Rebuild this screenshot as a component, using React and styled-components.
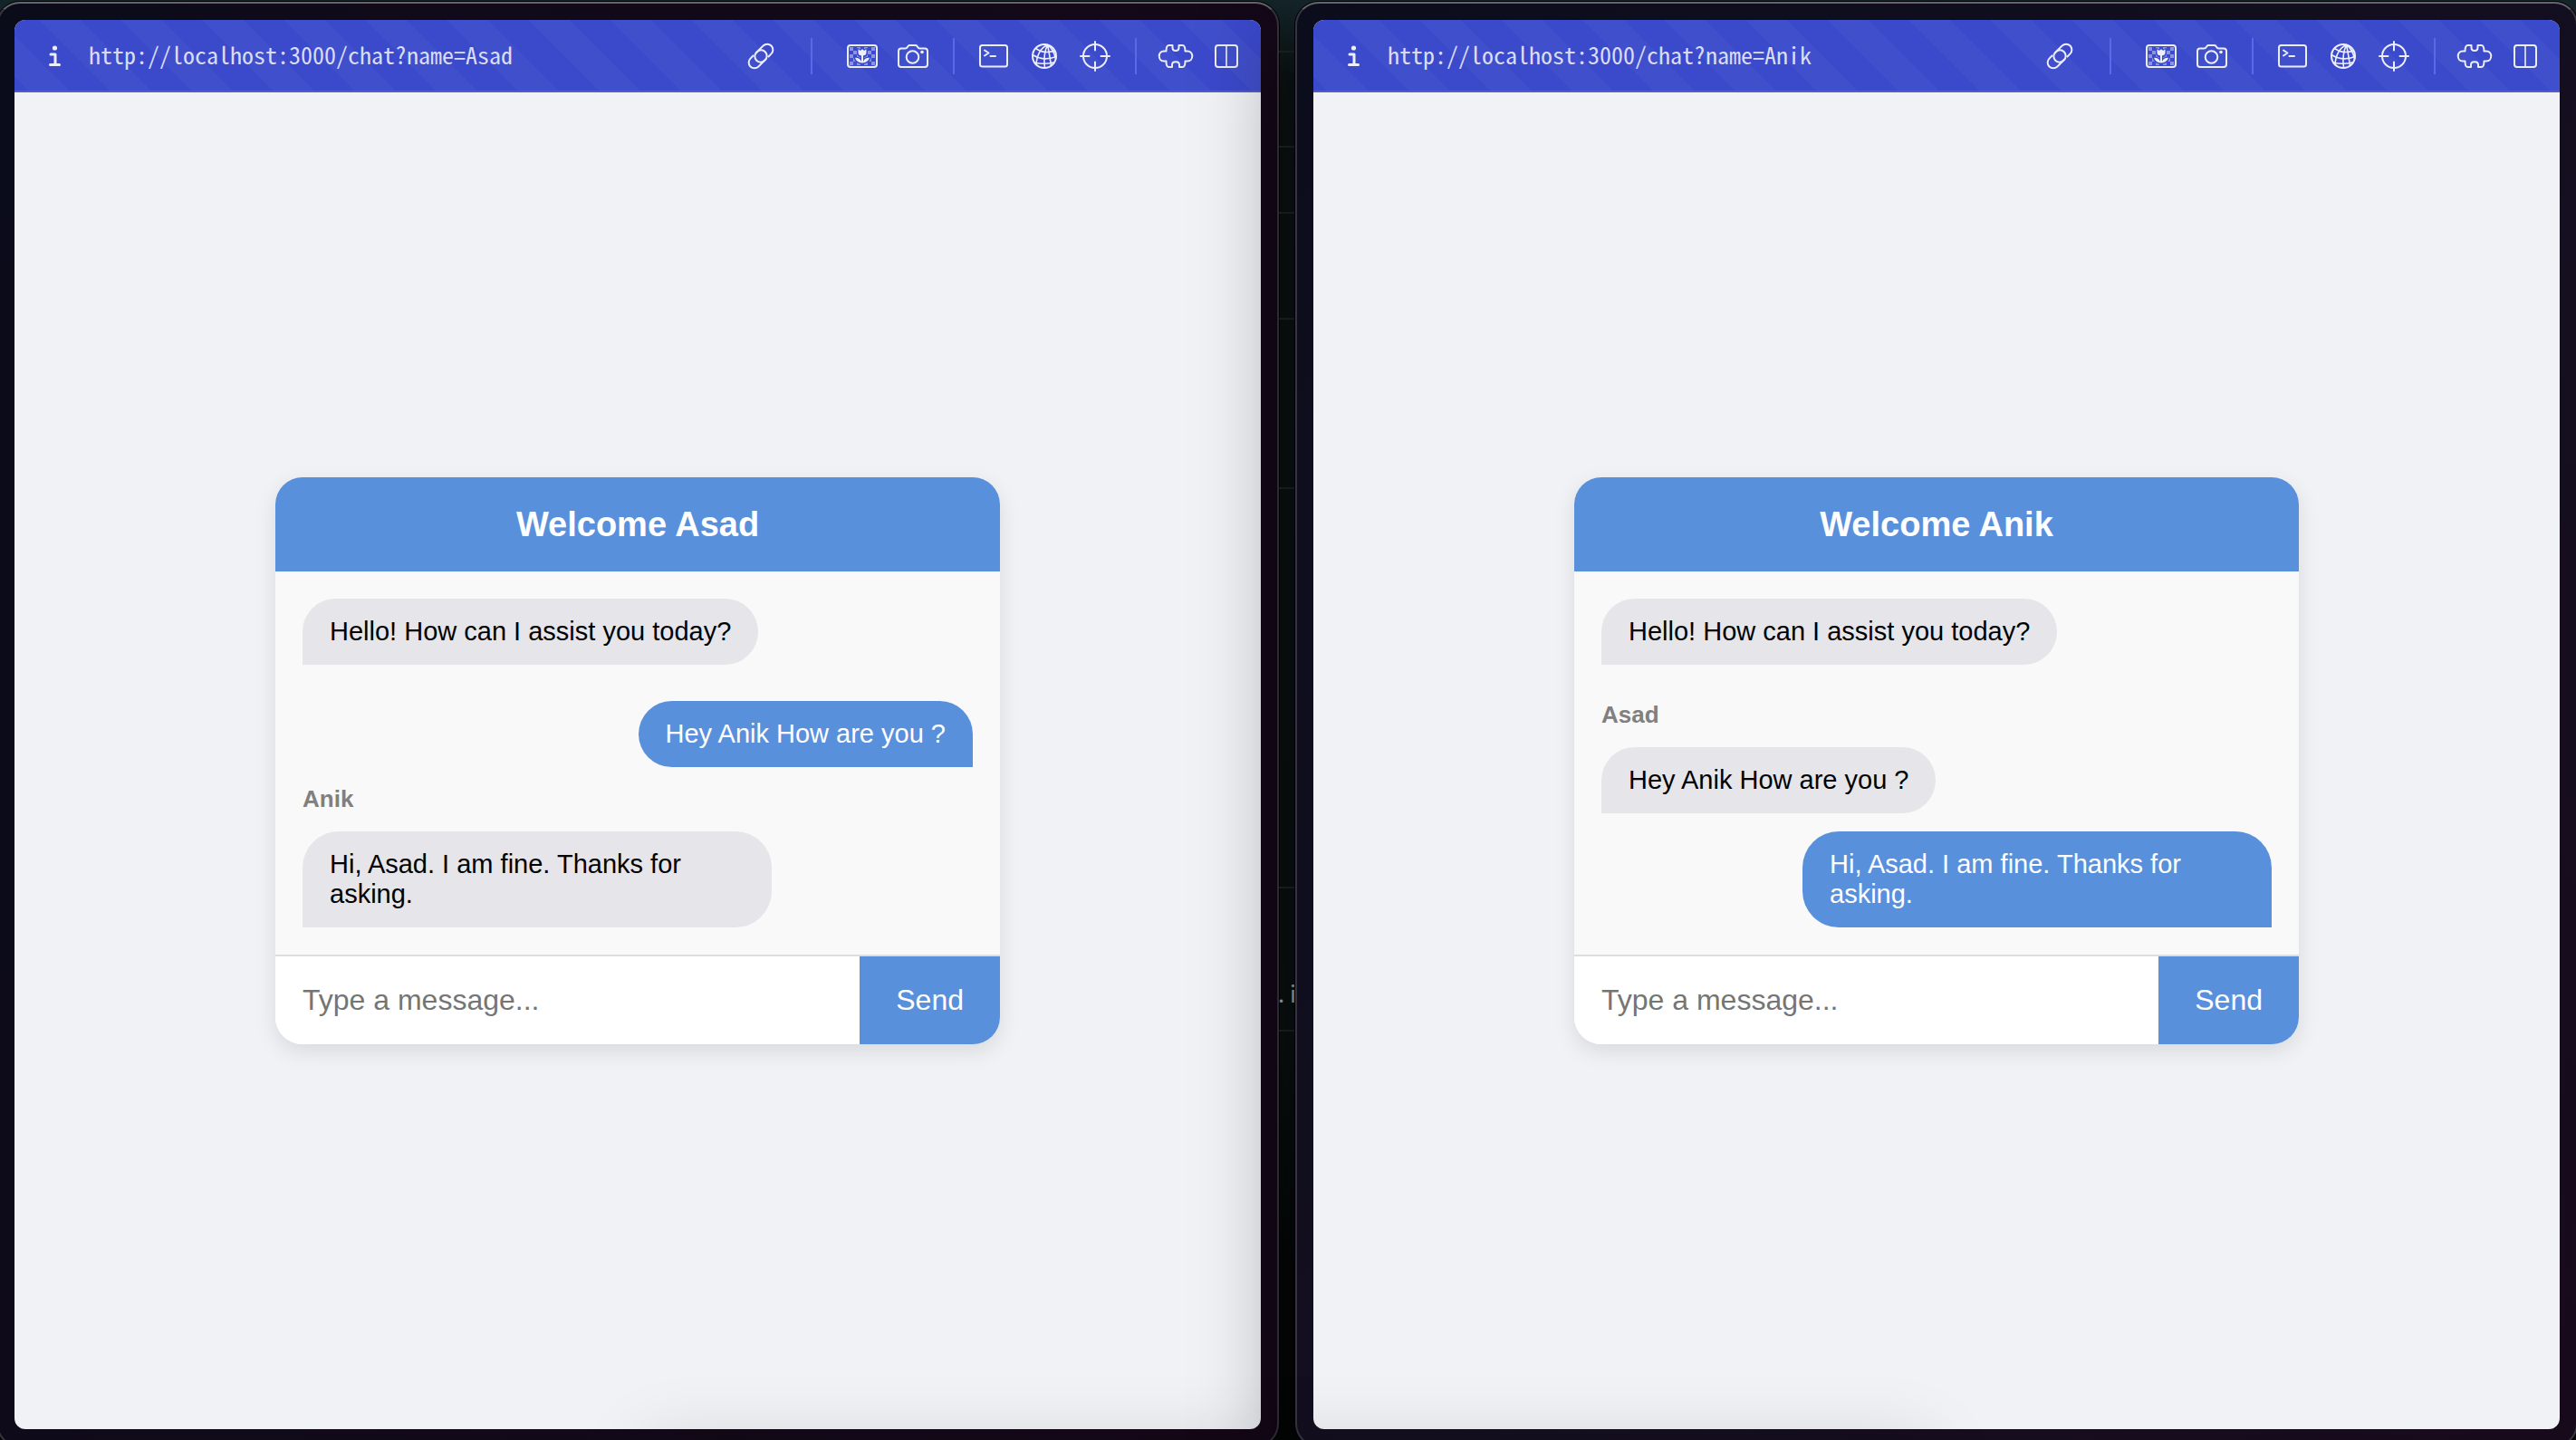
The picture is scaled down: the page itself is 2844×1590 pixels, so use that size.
import React from "react";
import styled, { createGlobalStyle, css } from "styled-components";

const GlobalStyle = createGlobalStyle`
  *, *::before, *::after { box-sizing: border-box; }
  html, body { margin: 0; padding: 0; background: #0c1414; }
  body { font-family: "Liberation Sans", Arial, sans-serif; }
  button, input { font-family: inherit; }
`;

const mono = `"Noto Sans Mono CJK SC", "DejaVu Sans Mono", monospace`;
const blue = "#5990dc";

const Viewport = styled.div`
  position: relative;
  height: 100vh;
  overflow: hidden;
  background: linear-gradient(#16282d 0, #0e1617 90px, #0d1415 1150px, #060909 1400px);

  /* soft shade rising from below the bottom edge, over both windows */
  &::after {
    content: "";
    position: absolute;
    top: 100%;
    left: 25%;
    right: 25%;
    height: 80px;
    pointer-events: none;
    box-shadow: 0 0 80px rgba(0, 0, 0, 0.12);
  }
`;

const Desktop = styled.main`
  display: grid;
  grid-template-columns: minmax(0, 1fr) 18px minmax(0, 1fr);
  height: calc(100vh + 8px);
  margin: 0 -2px 0 -4px;
`;

const Window = styled.section`
  display: flex;
  margin-top: 2px;
  padding: 18px;
  border: 2px solid #39333f;
  border-top-color: #66646a;
  border-radius: 26px;
  background: ${(p) => p.$tint};
  box-shadow: 0 0 0 1px #000, 0 36px 100px rgba(0, 0, 0, 0.5);
`;

const Screen = styled.div`
  flex: 1;
  min-width: 0;
  display: flex;
  flex-direction: column;
  overflow: hidden;
  border-radius: 12px;
  background: #f0f2f6;
`;

const Toolbar = styled.header`
  display: flex;
  align-items: center;
  height: 80px;
  padding: 2px 10px 0 16px;
  border-bottom: 2px solid #4f5cd1;
  color: #edeefb;
  background-color: #3b49cb;
  background-image: linear-gradient(
    45deg,
    #404fcb 25%,
    transparent 25%,
    transparent 50%,
    #404fcb 50%,
    #404fcb 75%,
    transparent 75%
  );
  background-size: 90px 90px;
  background-position: 28px 0;
`;

const ToolButton = styled.button`
  flex: none;
  display: flex;
  align-items: center;
  justify-content: center;
  width: 56px;
  height: 56px;
  padding: 0;
  border: 0;
  background: none;
  color: inherit;
`;

const Divider = styled.span`
  flex: none;
  width: 2px;
  height: 40px;
  margin: ${(p) => (p.$wide ? "0 27px" : "0 15px 0 16px")};
  background: #5a68ea;
`;

const Address = styled.input`
  flex: 1;
  min-width: 0;
  height: 50px;
  padding: 0 0 6px 10px;
  border: 0;
  outline: 0;
  background: none;
  color: #dadcf6;
  font-family: ${mono};
  font-size: 26px;
`;

const Page = styled.div`
  flex: 1;
  display: flex;
  align-items: center;
  justify-content: center;
`;

const ChatCard = styled.article`
  width: 100%;
  max-width: 800px;
  overflow: hidden;
  border-radius: 30px;
  background: #fff;
  box-shadow: 0 8px 24px rgba(0, 0, 0, 0.1);
`;

const ChatTitle = styled.h1`
  margin: 0;
  padding: 30px;
  background: ${blue};
  color: #fff;
  font-size: 38px;
  line-height: 44px;
  text-align: center;
`;

const Messages = styled.div`
  display: flex;
  flex-direction: column;
  gap: 20px;
  padding: 30px;
  background: #f9f9f9;
`;

const Sender = styled.div`
  color: #808080;
  font-size: 26px;
  font-weight: 700;
  line-height: 31px;
`;

const Bubble = styled.p`
  max-width: 70%;
  margin: 0;
  padding: 20px 30px;
  font-size: 29px;
  line-height: 33px;
  ${(p) =>
    p.$own
      ? css`
          align-self: flex-end;
          border-radius: 40px 40px 0 40px;
          background: ${blue};
          color: #fff;
        `
      : css`
          align-self: flex-start;
          border-radius: 40px 40px 40px 0;
          background: #e5e5ea;
          color: #000;
        `}
  ${(p) => p.$greeting && "margin-bottom: 20px;"}
`;

const Composer = styled.form`
  display: flex;
  border-top: 2px solid #ddd;
`;

const MessageInput = styled.input`
  flex: 1;
  min-width: 0;
  padding: 30px;
  border: 0;
  outline: 0;
  background: #fff;
  font-size: 32px;
  line-height: 37px;
  &::placeholder { color: #757575; opacity: 1; }
`;

const SendButton = styled.button`
  padding: 0 40px;
  border: 0;
  background: ${blue};
  color: #fff;
  font-size: 32px;
`;

const Gutter = styled.div`
  display: flex;
  flex-direction: column;
  overflow: hidden;
`;

const Strip = styled.div`
  flex: none;
  display: flex;
  align-items: flex-end;
  justify-content: center;
  height: ${(p) => p.$h}px;
  padding-bottom: 26px;
  border-bottom: 2px solid #1c2323;
  color: #a4a8a8;
  font-family: ${mono};
  font-size: 26px;
  line-height: 30px;
`;

const Icon = ({ w, h, children }) => (
  <svg
    width={w}
    height={h}
    viewBox={`0 0 ${w} ${h}`}
    fill="none"
    stroke="currentColor"
    strokeWidth="2"
    strokeLinecap="round"
    strokeLinejoin="round"
    aria-hidden="true"
  >
    {children}
  </svg>
);

const InfoIcon = () => (
  <Icon w={16} h={24}>
    <circle cx="8.5" cy="3" r="2.6" fill="currentColor" stroke="none" />
    <path d="M4 10H9V21.5M3.5 21.5H13.5" strokeWidth="3" />
  </Icon>
);

const LinkIcon = () => (
  <Icon w={32} h={32}>
    <g transform="translate(16 16) rotate(-45)" strokeLinecap="butt">
      <path d="M5 6.3H10A6.3 6.3 0 0 0 10-6.3H-0.500A6.300 6.300 0 0 0-0.500 6.300H2" />
      <path d="M-5-6.3H-10A6.3 6.3 0 0 0-10 6.3H0.500A6.300 6.300 0 0 0 0.500-6.300H-2" />
    </g>
  </Icon>
);

const checks = [];
for (let row = 0; row < 5; row++)
  for (let col = 0; col < 7; col++) if ((row + col) % 2 === 0) checks.push([col, row]);

const PictureIcon = () => (
  <Icon w={34} h={26}>
    <g fill="#8c94e2" stroke="none">
      {checks.map(([c, r]) => (
        <rect key={`${c}-${r}`} x={3 + c * 4} y={3 + r * 4} width="4" height="4" />
      ))}
    </g>
    <path
      d="M12 5 14.5 6.5 17 4.5 19.5 6.5 22 5V9.5Q21.500 13 18 13.500V18.500Q20 14 25.500 14.500Q24 20.500 17 21Q10 20.500 8.500 14.500Q14 14 16 18.500V13.500Q12.500 13 12 9.500Z"
      fill="#3b49cb"
      stroke="#3b49cb"
    />
    <path
      d="M12.500 5.500Q14 5.500 14.700 7L17 5.200 19.300 7Q20 5.500 21.500 5.500V9Q21.500 12 18 12.500V19Q20 14.500 25 14.800Q23.500 20 17 20.500Q10.500 20 9 14.800Q14 14.500 16 19V12.500Q12.500 12 12.500 9Z"
      fill="currentColor"
      stroke="none"
    />
    <rect x="1" y="1" width="32" height="24" rx="3" />
  </Icon>
);

const CameraIcon = () => (
  <Icon w={34} h={28}>
    <path d="M4 5.500H8.500Q10 5.500 10.800 4L11.500 3Q12.200 2 13.500 2H19.500Q20.800 2 21.500 3L22.200 4Q23 5.500 24.500 5.500H30Q33 5.500 33 8.500V23Q33 26 30 26H4Q1 26 1 23V8.500Q1 5.500 4 5.500Z" />
    <circle cx="16.500" cy="15" r="6.800" />
    <circle cx="27" cy="9.500" r="1.800" fill="currentColor" stroke="none" />
  </Icon>
);

const TerminalIcon = () => (
  <Icon w={32} h={26}>
    <rect x="1" y="1" width="30" height="23.500" rx="2.500" />
    <path d="M6 6.500 10.500 9.500 6 12.500M12.500 13H18" />
  </Icon>
);

const GlobeIcon = () => (
  <Icon w={30} h={30}>
    <circle cx="15" cy="15" r="13" />
    <g strokeWidth="1.600">
      <path d="M18.500 2.500Q7 8 6 24.500M18.500 2.500Q13.500 13 15.500 28M18.500 2.500Q20.500 12 22.500 25.500M18.500 2.500Q25 7 27.500 17.500" />
      <path d="M5.500 6.500Q15 13 26.500 9M2 13.500Q14 21 28 15.500M4 22Q14 24.500 25 22" />
    </g>
  </Icon>
);

const CrosshairIcon = () => (
  <Icon w={34} h={34}>
    <circle cx="17" cy="17" r="13" />
    <path d="M17 1V10.500M17 23.500V33M1 17H10.500M23.500 17H33" />
  </Icon>
);

const PuzzleIcon = () => (
  <Icon w={40} h={28}>
    <path d="M12.500 2H16.500V4.500C16.500 9.200 23.500 9.200 23.500 4.500V2H27.500C30 2 30.500 4 30.500 8.500H33C40 8.500 40 19.500 33 19.500H30.500C30.500 24 30 26 27.500 26H24V23.500C24 19 16 19 16 23.500V26H12.500C10 26 9.500 24 9.500 19.500H7C0 19.500 0 8.500 7 8.500H9.500C9.500 4 10 2 12.500 2Z" />
  </Icon>
);

const ColumnsIcon = () => (
  <Icon w={26} h={26}>
    <rect x="1" y="1" width="24" height="24" rx="3" />
    <path d="M13 1V25" opacity="0.800" />
  </Icon>
);

function Browser({ tint, user, messages }) {
  return (
    <Window $tint={tint}>
      <Screen>
        <Toolbar>
          <ToolButton type="button" aria-label="Page info"><InfoIcon /></ToolButton>
          <Address
            type="text"
            aria-label="Address"
            readOnly
            value={`http://localhost:3000/chat?name=${user}`}
          />
          <ToolButton type="button" aria-label="Copy link"><LinkIcon /></ToolButton>
          <Divider $wide />
          <ToolButton type="button" aria-label="Picture"><PictureIcon /></ToolButton>
          <ToolButton type="button" aria-label="Screenshot"><CameraIcon /></ToolButton>
          <Divider />
          <ToolButton type="button" aria-label="Console"><TerminalIcon /></ToolButton>
          <ToolButton type="button" aria-label="Network"><GlobeIcon /></ToolButton>
          <ToolButton type="button" aria-label="Inspect"><CrosshairIcon /></ToolButton>
          <Divider />
          <ToolButton type="button" aria-label="Extensions"><PuzzleIcon /></ToolButton>
          <ToolButton type="button" aria-label="Split view"><ColumnsIcon /></ToolButton>
        </Toolbar>
        <Page>
          <ChatCard>
            <ChatTitle>Welcome {user}</ChatTitle>
            <Messages>
              <Bubble $greeting>Hello! How can I assist you today?</Bubble>
              {messages.map(({ from, text }) => (
                <React.Fragment key={text}>
                  {from !== user && <Sender>{from}</Sender>}
                  <Bubble $own={from === user}>{text}</Bubble>
                </React.Fragment>
              ))}
            </Messages>
            <Composer onSubmit={(e) => e.preventDefault()}>
              <MessageInput type="text" aria-label="Message" placeholder="Type a message..." />
              <SendButton type="submit">Send</SendButton>
            </Composer>
          </ChatCard>
        </Page>
      </Screen>
    </Window>
  );
}

const conversation = [
  { from: "Asad", text: "Hey Anik How are you ?" },
  { from: "Anik", text: "Hi, Asad. I am fine. Thanks for asking." },
];

const strips = [
  { height: 58 },
  { height: 105 },
  { height: 73 },
  { height: 117 },
  { height: 187 },
  { height: 441 },
  { height: 158, text: ".i" },
];

export default function App() {
  return (
    <>
      <GlobalStyle />
      <Viewport>
        <Desktop>
          <Browser
            user="Asad"
            messages={conversation}
            tint="linear-gradient(100deg, #0a0c1a 0, #100a19 400px, #150818 100%)"
          />
          <Gutter>
            {strips.map(({ height, text }) => (
              <Strip key={height} $h={height}>{text}</Strip>
            ))}
          </Gutter>
          <Browser
            user="Anik"
            messages={conversation}
            tint="linear-gradient(130deg, #0b0d1c 0, #150f20 60%, #170a1b 100%)"
          />
        </Desktop>
      </Viewport>
    </>
  );
}
